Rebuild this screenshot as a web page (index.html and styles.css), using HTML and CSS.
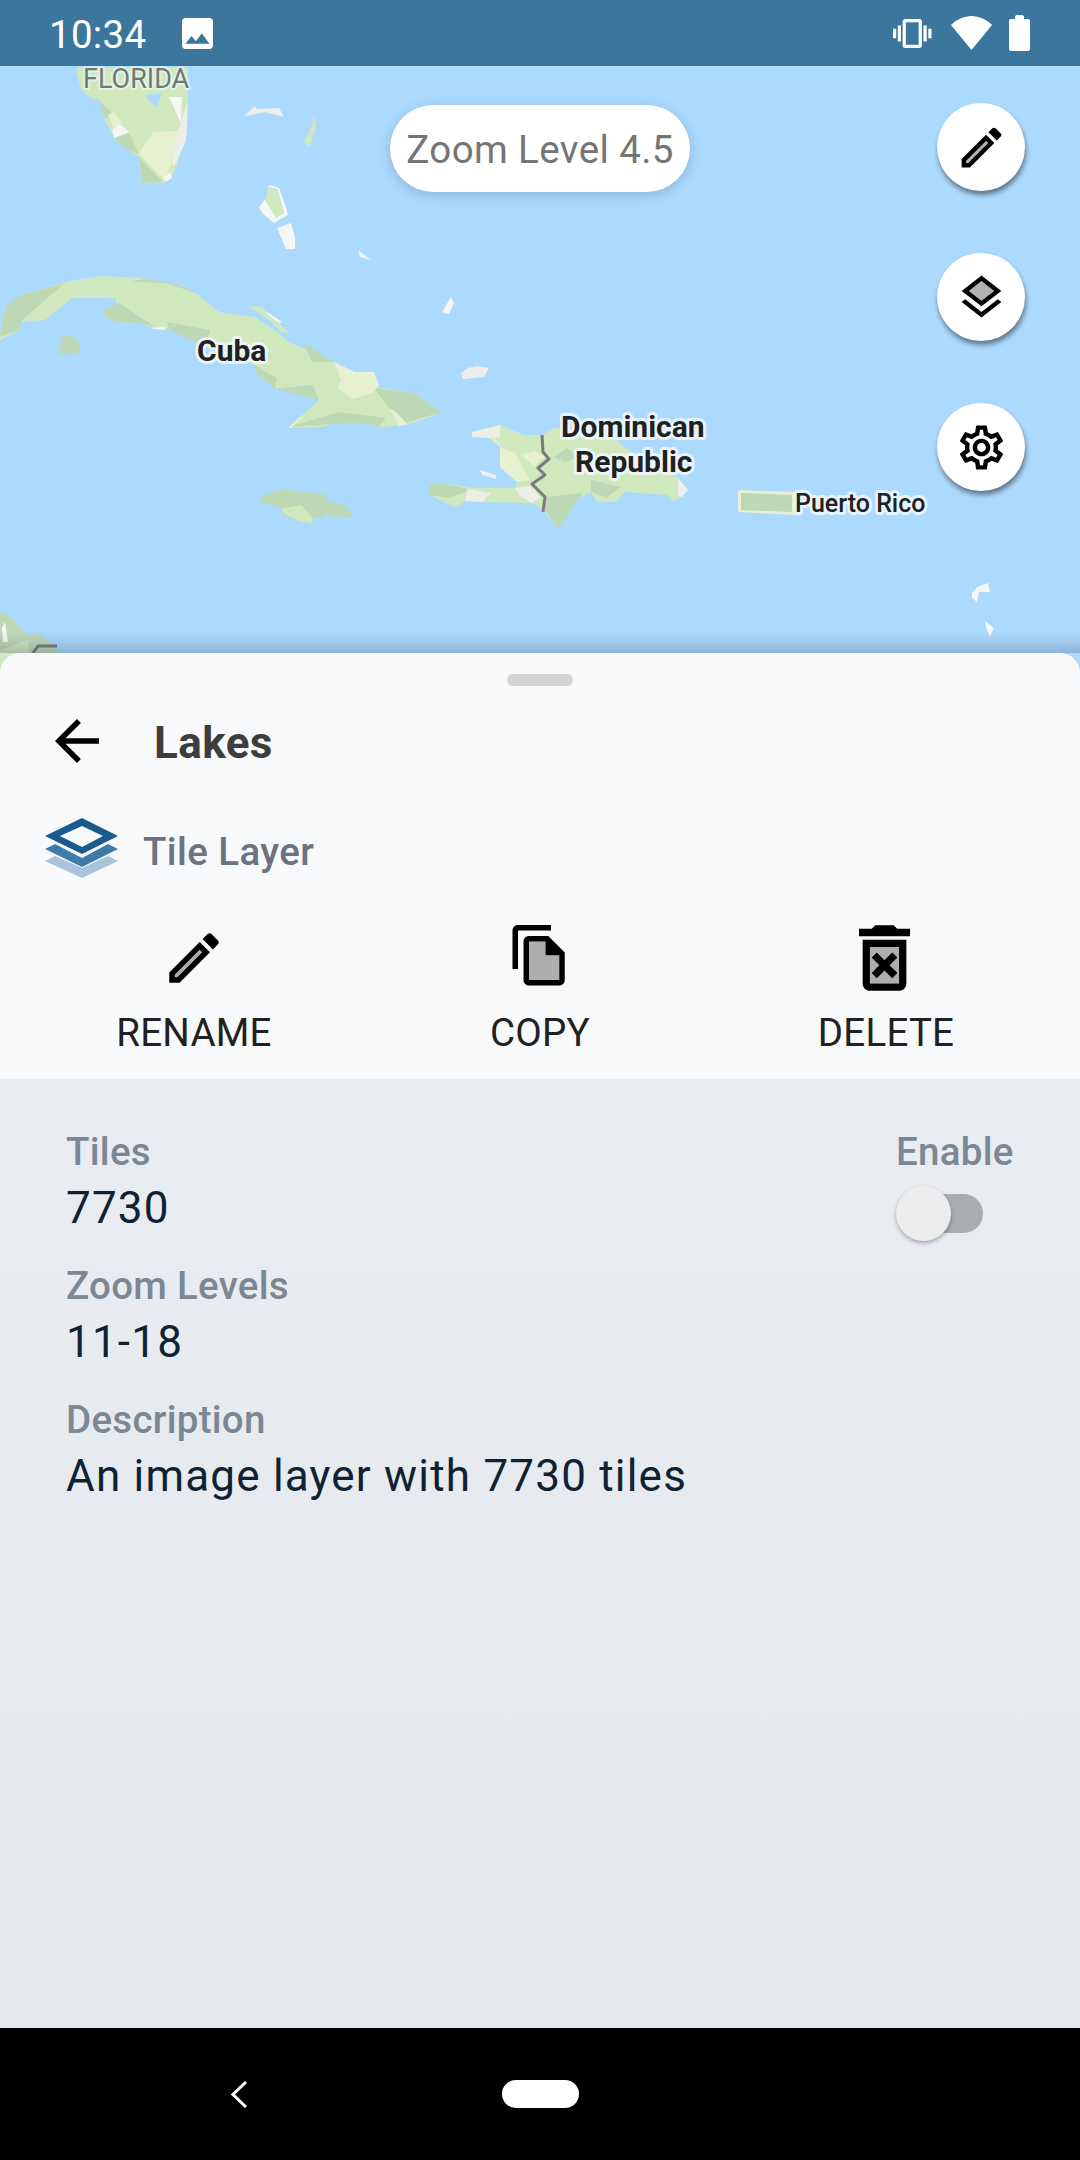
FILE: index.html
```html
<!DOCTYPE html>
<html lang="en">
<head>
<meta charset="utf-8">
<title>Lakes</title>
<link rel="stylesheet" href="styles.css">
</head>
<body>
<div class="phone">
  <header class="status">
    <span class="time">10:34</span>
    <svg class="ic-image" viewBox="3 3 18 18"><path d="M21 19V5c0-1.1-.9-2-2-2H5c-1.1 0-2 .9-2 2v14c0 1.1.9 2 2 2h14c1.1 0 2-.9 2-2zM8.5 13.5l2.5 3.01L14.5 12l4.5 6H5l3.5-4.5z"/></svg>
    <div class="status-right">
      <svg class="ic-vib" viewBox="0 3 24 18"><path d="M0 15h2V9H0v6zm3 2h2V7H3v10zm19-8v6h2V9h-2zm-3 8h2V7h-2v10zM16.5 3h-9C6.67 3 6 3.67 6 4.5v15c0 .83.67 1.5 1.5 1.5h9c.83 0 1.5-.67 1.5-1.5v-15c0-.83-.67-1.5-1.5-1.5zM16 19H8V5h8v14z"/></svg>
      <svg class="ic-wifi" viewBox="0 0 41 34"><path d="M20.5 34 0 9C5.500 3.500 13 0 20.500 0S35.500 3.500 41 9z"/></svg>
      <svg class="ic-batt" viewBox="0 0 21 36"><path d="M6 2c0-1 .6-2 2-2h5c1.400 0 2 1 2 2v2h4c1.200 0 2 .8 2 2v28c0 1.200-.8 2-2 2H2c-1.200 0-2-.8-2-2V6c0-1.200.8-2 2-2h4z"/></svg>
    </div>
  </header>

  <section class="map">
    <svg class="map-art" viewBox="0 66 1080 609">
      <!-- Florida -->
      <polygon class="l" points="76,67 188,67 188,97 186,140 172,177 164,183 142,183 139,157 115,140 112,133 103,117 100,100 91,98 81,90"/>
      <polygon class="s" points="145,95 162,93 157,107 151,103"/>
      <polygon class="d" points="100,102 112,112 107,118 103,117"/>
      <polygon class="d" points="115,138 129,133 139,154 127,150"/>
      <polygon class="d" points="139,157 163,182 142,183"/>
      <polygon class="p" points="153,132 178,131 172,163 164,180 139,154"/>
      <polygon class="p" points="108,115 114,112 122,123 114,128"/>
      <polygon class="w" points="169,97 182,97 181,123"/>
      <polygon class="w" points="112,130 120,124 129,132 114,138"/>
      <polygon class="b" points="178,131 188,100 186,140 174,167 172,163"/>
      <polygon class="w" points="164,177 170,172 172,178 165,182"/>
      <!-- Bahamas -->
      <polygon class="b" points="244,116 255,106 257,109 279,108 284,117 265,112 251,115"/>
      <polygon class="l" points="301,106 315,117 316,125 310,147 304,142 312,125 314,117"/>
      <polygon class="w" points="269,185 279,188 286,207 288,215 274,223 262,213 259,207 267,197"/>
      <polygon class="l" points="269,187 278,189 284,213 276,218 265,200"/>
      <polygon class="w" points="277,228 291,223 295,237 295,249 286,249"/>
      <polygon class="w" points="359,251 371,260 360,257"/>
      <polygon class="w" points="451,297 454,303 449,314 442,312"/>
      <polygon class="b" points="461,373 468,368 477,366 489,368 484,377 463,379"/>
      <!-- Cuba -->
      <polygon class="l" points="0,333 2,320 7,305 21,295 65,282 100,276 145,278 179,285 196,293 219,312 255,317 275,330 289,342 334,362 355,372 374,372 379,385 372,390 375,387 413,393 441,412 430,417 406,425 379,427 365,423 331,424 322,427 288,428 300,417 319,400 312,385 275,389 255,373 255,365 196,342 169,330 152,328 141,323 114,322 100,312 119,310 115,298 72,298 45,320 21,322 19,330 0,340"/>
      <polygon class="d" points="2,320 7,305 21,295 65,283 22,320 21,322 19,330 0,337"/>
      <polygon class="d" points="131,282 145,278 179,285 196,293 165,283"/>
      <polygon class="d" points="100,312 119,303 155,327 141,323 114,322"/>
      <polygon class="d" points="167,322 210,330 208,337 196,342 169,330"/>
      <polygon class="d" points="255,365 277,378 275,389 255,373"/>
      <polygon class="d" points="303,342 334,362 312,362"/>
      <polygon class="d" points="275,389 312,385 319,400"/>
      <polygon class="d" points="374,388 413,393 441,412 406,423 389,408"/>
      <polygon class="d" points="289,427 339,412 386,418 379,427 365,423 331,424"/>
      <polygon class="p" points="334,362 355,372 374,372 379,385 372,393 353,399 337,388 341,380"/>
      <polygon class="p" points="389,408 396,412 407,424 399,426"/>
      <polygon class="w" points="152,328 165,327 165,330 153,329"/>
      <polygon class="p" points="288,428 300,417 302,417 291,428"/>
      <polygon class="l" points="248,306 262,307 275,320 289,332 281,333 272,322"/>
      <polygon class="w" points="267,312 282,322 279,323 268,315"/>
      <polygon class="d" points="60,338 71,335 80,343 79,353 62,355 56,349 61,347"/>
      <!-- Jamaica -->
      <polygon class="d" points="260,497 281,489 325,494 327,501 346,505 353,517 334,518 325,513 324,517 313,518 313,524 296,520 286,517 281,508 262,502"/>
      <polygon class="l" points="281,509 301,505 312,517 313,524 296,520 286,515"/>
      <!-- Hispaniola -->
      <polygon class="l" points="472,432 500,425 524,435 543,435 552,428 608,432 625,448 678,478 688,490 682,497 673,501 667,495 625,492 615,502 597,502 591,492 582,497 578,493 558,529 543,510 532,503 482,502 465,501 456,508 430,495 429,484 443,483 472,488 515,488 517,482 500,467 502,448 489,438 472,437"/>
      <polygon class="p" points="500,447 515,453 530,480 517,482 500,467"/>
      <polygon class="b" points="472,432 500,425 500,437 489,438 472,437"/>
      <polygon class="y" points="489,432 502,447 493,440"/>
      <polygon class="d" points="429,484 443,483 472,490 448,498 429,495"/>
      <polygon class="b" points="467,489 491,493 482,502 465,501"/>
      <polygon class="d" points="545,497 582,493 573,508 558,529 545,510"/>
      <polygon class="d" points="591,480 621,487 606,498 591,492"/>
      <polygon class="d" points="554,457 567,448 578,457 565,462"/>
      <polygon class="p" points="521,455 534,451 545,457 534,466"/>
      <polygon class="b" points="678,478 688,490 682,497 678,495"/>
      <polygon class="b" points="515,488 530,486 540,497 532,503 520,496"/>
      <polygon class="b" points="480,470 496,475 496,479 482,475"/>
      <polyline class="border" points="542,435 543,452 549,459 538,468 545,475 532,484 545,497 543,512"/>
      <!-- Puerto Rico and islets -->
      <polygon class="p" points="738,490 795,492 795,515 738,512"/>
      <polygon class="d" points="741,493 792,495 792,512 741,510"/>
      <polygon class="w" points="972,593 977,587 988,583 990,592 979,592 977,602 972,598"/>
      <polygon class="w" points="985,621 994,628 990,637 986,627"/>
      <!-- Bottom-left land -->
      <polygon class="d" points="0,612 9,615 28,635 38,633 57,647 60,675 0,675"/>
      <polygon class="l" points="0,650 28,640 30,675 0,675"/>
      <polygon class="w" points="2,628 5,622 8,642 3,642"/>
      <polyline class="border" points="33,653 38,646 57,646"/>
      <!-- Labels -->
      <text class="lbl lbl-florida" x="83" y="88">FLORIDA</text>
      <text class="lbl lbl-place" x="197" y="361">Cuba</text>
      <text class="lbl lbl-place" x="561" y="437">Dominican</text>
      <text class="lbl lbl-place" x="575" y="472">Republic</text>
      <text class="lbl lbl-small" x="795" y="512">Puerto Rico</text>
    </svg>

    <div class="zoom-pill">Zoom Level 4.5</div>

    <div class="fabs">
      <button class="fab"><svg class="fab-ic" viewBox="0 0 24 24"><path class="tone" d="M5 18.080V19h.92l9.060-9.060-.92-.92z"/><path d="M20.710 7.040c.39-.39.39-1.020 0-1.410l-2.340-2.340c-.2-.2-.45-.29-.71-.29s-.51.1-.7.29l-1.830 1.830 3.750 3.750 1.830-1.830zM3 17.250V21h3.750L17.810 9.940l-3.750-3.750L3 17.250zM5.920 19H5v-.92l9.060-9.060.92.92L5.920 19z"/></svg></button>
      <button class="fab"><svg class="fab-ic" viewBox="0 0 24 24"><path class="tone" d="M6.260 9L12 13.470 17.740 9 12 4.530z"/><path d="M19.370 12.800l-7.380 5.740-7.370-5.730L3 14.070l9 7 9-7zM12 2L3 9l1.630 1.270L12 16l7.360-5.730L21 9l-9-7zm0 11.470L6.260 9 12 4.530 17.740 9 12 13.470z"/></svg></button>
      <button class="fab"><svg class="fab-ic" viewBox="0 0 24 24"><path d="M19.430 12.980c.04-.32.07-.64.07-.98 0-.34-.03-.66-.07-.98l2.110-1.650c.19-.15.24-.42.12-.64l-2-3.460c-.09-.16-.26-.25-.44-.25-.06 0-.12.01-.17.03l-2.490 1c-.52-.4-1.080-.73-1.690-.98l-.38-2.650C14.460 2.180 14.250 2 14 2h-4c-.25 0-.46.18-.49.42l-.38 2.650c-.61.25-1.170.59-1.690.98l-2.490-1c-.06-.02-.12-.03-.18-.03-.17 0-.34.09-.43.25l-2 3.460c-.13.22-.07.49.12.64l2.110 1.650c-.04.32-.07.65-.07.98 0 .33.03.66.07.98l-2.110 1.650c-.19.15-.24.42-.12.64l2 3.460c.09.16.26.25.44.25.06 0 .12-.01.17-.03l2.490-1c.52.4 1.080.73 1.690.98l.38 2.650c.03.24.24.42.49.42h4c.25 0 .46-.18.49-.42l.38-2.650c.61-.25 1.170-.59 1.690-.98l2.490 1c.06.02.12.03.18.03.17 0 .34-.09.43-.25l2-3.460c.12-.22.07-.49-.12-.64l-2.110-1.650zm-1.980-1.710c.04.31.05.52.05.73 0 .21-.02.43-.05.73l-.14 1.130.89.7 1.080.84-.7 1.210-1.270-.51-1.040-.42-.9.68c-.43.32-.84.56-1.250.73l-1.060.43-.16 1.130-.2 1.350h-1.400l-.19-1.350-.16-1.130-1.060-.43c-.43-.18-.83-.41-1.230-.71l-.91-.7-1.060.43-1.270.51-.7-1.210 1.080-.84.89-.7-.14-1.130c-.03-.31-.05-.54-.05-.74s.02-.43.05-.73l.14-1.130-.89-.7-1.080-.84.7-1.210 1.270.51 1.040.42.9-.68c.43-.32.84-.56 1.250-.73l1.060-.43.16-1.130.2-1.350h1.390l.19 1.350.16 1.130 1.060.43c.43.18.83.41 1.230.71l.91.7 1.060-.43 1.270-.51.7 1.210-1.070.85-.89.7.14 1.130zM12 8c-2.210 0-4 1.790-4 4s1.790 4 4 4 4-1.790 4-4-1.790-4-4-4zm0 6c-1.100 0-2-.9-2-2s.9-2 2-2 2 .9 2 2-.9 2-2 2z"/></svg></button>
    </div>
  </section>

  <main class="sheet">
    <div class="sheet-top">
      <div class="handle"></div>
      <div class="title-row">
        <svg class="ic-back" viewBox="0 0 24 24"><path d="M20 11H7.830l5.590-5.590L12 4l-8 8 8 8 1.410-1.410L7.830 13H20v-2z"/></svg>
        <h1 class="title">Lakes</h1>
      </div>
      <div class="type-row">
        <svg class="ic-layer" viewBox="45 818 73 60">
          <path class="layer-c" d="M55 856 82 868 108 856 118 861 82 878 45 861z"/>
          <path class="layer-b" d="M55 844 82 858 108 844 118 849 82 867 45 849z"/>
          <path class="layer-a" fill-rule="evenodd" d="M82 818 118 836 82 854 45 836zM82 826 60 836 82 847 103 836z"/>
        </svg>
        <span class="type-name">Tile Layer</span>
      </div>
      <div class="actions">
        <div class="action">
          <svg class="act-ic" viewBox="0 0 24 24"><path class="tone" d="M5 18.080V19h.92l9.060-9.060-.92-.92z"/><path d="M20.710 7.040c.39-.39.39-1.020 0-1.410l-2.340-2.340c-.2-.2-.45-.29-.71-.29s-.51.1-.7.29l-1.830 1.830 3.750 3.750 1.830-1.830zM3 17.250V21h3.750L17.810 9.940l-3.750-3.750L3 17.250zM5.920 19H5v-.92l9.060-9.060.92.92L5.920 19z"/></svg>
          <span class="act-label">RENAME</span>
        </div>
        <div class="action">
          <svg class="act-ic" viewBox="0 1 24 24"><path class="tone" d="M14 7H8v14h11v-9h-5z"/><path d="M16 1H4c-1.100 0-2 .9-2 2v14h2V3h12V1zm-1 4H8c-1.100 0-1.990.9-1.990 2L6 21c0 1.100.89 2 1.990 2H19c1.100 0 2-.9 2-2V11l-6-6zm4 16H8V7h6v5h5v9z"/></svg>
          <span class="act-label">COPY</span>
        </div>
        <div class="action">
          <svg class="act-ic act-ic-del" viewBox="5 3 14 18"><path class="tone" d="M8 9h8v10H8z"/><path d="M14.120 10.470L12 12.590l-2.130-2.120-1.410 1.410L10.590 14l-2.120 2.120 1.410 1.410L12 15.410l2.120 2.120 1.410-1.410L13.410 14l2.120-2.120zM15.500 4l-1-1h-5l-1 1H5v2h14V4zM6 19c0 1.100.9 2 2 2h8c1.100 0 2-.9 2-2V7H6v12zM8 9h8v10H8V9z"/></svg>
          <span class="act-label">DELETE</span>
        </div>
      </div>
    </div>

    <div class="details">
      <div class="fields">
        <div class="field"><div class="f-label">Tiles</div><div class="f-value">7730</div></div>
        <div class="field"><div class="f-label">Zoom Levels</div><div class="f-value">11-18</div></div>
        <div class="field"><div class="f-label">Description</div><div class="f-value">An image layer with 7730 tiles</div></div>
      </div>
      <div class="enable">
        <div class="f-label">Enable</div>
        <div class="switch"><span class="track"></span><span class="thumb"></span></div>
      </div>
    </div>
  </main>

  <footer class="nav">
    <svg class="nav-back" viewBox="0 0 16 27"><polyline points="15,1 2,13.500 15,26"/></svg>
    <span class="nav-home"></span>
  </footer>
</div>
</body>
</html>
```

FILE: styles.css
```css
* { box-sizing: border-box; }
html, body { margin: 0; padding: 0; }
body { font-family: Roboto, "Noto Sans", sans-serif; background: #000; }
svg { display: block; flex: none; }

.phone { width: 1080px; height: 2160px; display: flex; flex-direction: column; overflow: hidden; }

/* status bar */
.status { height: 66px; flex: none; background: #3c769c; display: flex; align-items: center; padding: 0 50px 0 49px; color: #fff; fill: #fff; }
.time { font-size: 38.5px; line-height: 66px; padding-top: 3px; letter-spacing: .3px; }
.ic-image { width: 31px; height: 31px; margin-left: 36px; }
.status-right { margin-left: auto; display: flex; align-items: center; }
.ic-vib { width: 38.500px; height: 29px; }
.ic-wifi { width: 41px; height: 34px; margin-left: 19.500px; }
.ic-batt { width: 21px; height: 36px; margin-left: 17px; }

/* map */
.map { height: 609px; flex: none; position: relative; background: #acd9fe; }
.map-art { position: absolute; inset: 0; width: 1080px; height: 609px; overflow: visible; }
.map::after { content: ""; position: absolute; left: 0; right: 0; bottom: 22px; height: 22px; background: linear-gradient(to bottom, rgba(40,60,90,0), rgba(40,60,90,.08) 45%, rgba(40,60,90,.24)); }
.l { fill: #d0e8be; }
.d { fill: #bdd8b5; }
.p { fill: #e7f0d0; }
.w { fill: #f6f6f4; }
.b { fill: #eeeee8; }
.y { fill: #f8e8b8; }
.s { fill: #acd9fe; }
.border { fill: none; stroke: #7b7b7b; stroke-width: 3; stroke-linejoin: round; }
.lbl { font-family: Roboto, sans-serif; paint-order: stroke; stroke: rgba(240,248,255,.85); stroke-width: 6px; stroke-linejoin: round; }
.lbl-florida { font-size: 27px; fill: #6c7a74; stroke-width: 4px; stroke: rgba(240,248,255,.6); }
.lbl-place { font-size: 30px; font-weight: 700; fill: #212121; }
.lbl-small { font-size: 25px; font-weight: 500; fill: #212121; }

.zoom-pill { position: absolute; left: 390px; top: 39px; width: 300px; height: 87px; border-radius: 44px; background: #fff; color: #757575; font-size: 38.500px; font-weight: 400; letter-spacing: .4px; line-height: 89px; text-align: center; box-shadow: 0 3px 12px rgba(40,70,110,.25); }

.fabs { position: absolute; left: 937px; top: 37px; display: flex; flex-direction: column; gap: 62px; }
.fab { width: 88px; height: 88px; padding: 0; border: 0; border-radius: 50%; background: #fff; display: flex; align-items: center; justify-content: center; box-shadow: 1px 4px 5px rgba(0,0,0,.45); }
.fab-ic { width: 53px; height: 53px; }
.tone { opacity: .3; }

/* sheet */
.sheet { flex: 1; margin-top: -22px; position: relative; display: flex; flex-direction: column; }
.sheet-top { background: #f8f9fb; border-radius: 20px 20px 0 0; height: 426px; flex: none; padding-top: 21px; }
.handle { width: 66px; height: 12px; border-radius: 6px; background: #d2d2d2; margin: 0 auto; }
.title-row { display: flex; align-items: center; margin-top: 22px; padding-left: 44px; height: 66px; }
.ic-back { width: 66px; height: 66px; }
.title { margin: 0 0 0 44px; padding-top: 4px; font-size: 44px; font-weight: 700; letter-spacing: .4px; color: #3d3d3d; line-height: 66px; }
.type-row { display: flex; align-items: center; margin-top: 44px; padding-left: 45px; height: 60px; }
.ic-layer { width: 73px; height: 60px; }
.type-name { margin-left: 25px; padding-top: 7px; font-size: 38.500px; font-weight: 500; letter-spacing: .4px; color: #6b7280; }
.layer-a { fill: #1a5a8e; }
.layer-b { fill: #3e7ca8; }
.layer-c { fill: #a9c3da; }
.actions { display: grid; grid-template-columns: repeat(3, 1fr); padding: 0 21px; margin-top: 47px; }
.action { display: flex; flex-direction: column; align-items: center; }
.act-ic { width: 66px; height: 66px; }
.act-ic-del { width: 51px; margin-right: 3px; }
.act-label { margin-top: 19px; font-size: 38.500px; font-weight: 450; letter-spacing: .25px; line-height: 46px; color: #212121; }

/* details */
.details { flex: 1; background: linear-gradient(to bottom, #e9ecf0, #e4e9ec); padding: 50px 66px 0; display: flex; justify-content: space-between; }
.field { margin-bottom: 29px; }
.f-label { font-size: 38.500px; line-height: 46px; font-weight: 500; letter-spacing: .275px; color: #7b8794; }
.f-value { margin-top: 7px; font-size: 44px; font-weight: 450; line-height: 52px; letter-spacing: 1.2px; color: #0e2233; }
.enable { width: 118px; }
.switch { position: relative; width: 87px; height: 55px; margin-top: 11px; }
.track { position: absolute; left: 7px; top: 8px; width: 80px; height: 39px; border-radius: 20px; background: #aaadb0; }
.thumb { position: absolute; left: 0; top: 0; width: 55px; height: 55px; border-radius: 50%; background: #ececec; box-shadow: 0 2px 4px rgba(0,0,0,.3); }

/* nav */
.nav { height: 132px; flex: none; background: #000; display: flex; align-items: center; padding-left: 231px; }
.nav-back { width: 16px; height: 27px; fill: none; stroke: #fff; stroke-width: 3; }
.nav-home { width: 77px; height: 28px; border-radius: 14px; background: #fff; margin-left: 255px; }
```
